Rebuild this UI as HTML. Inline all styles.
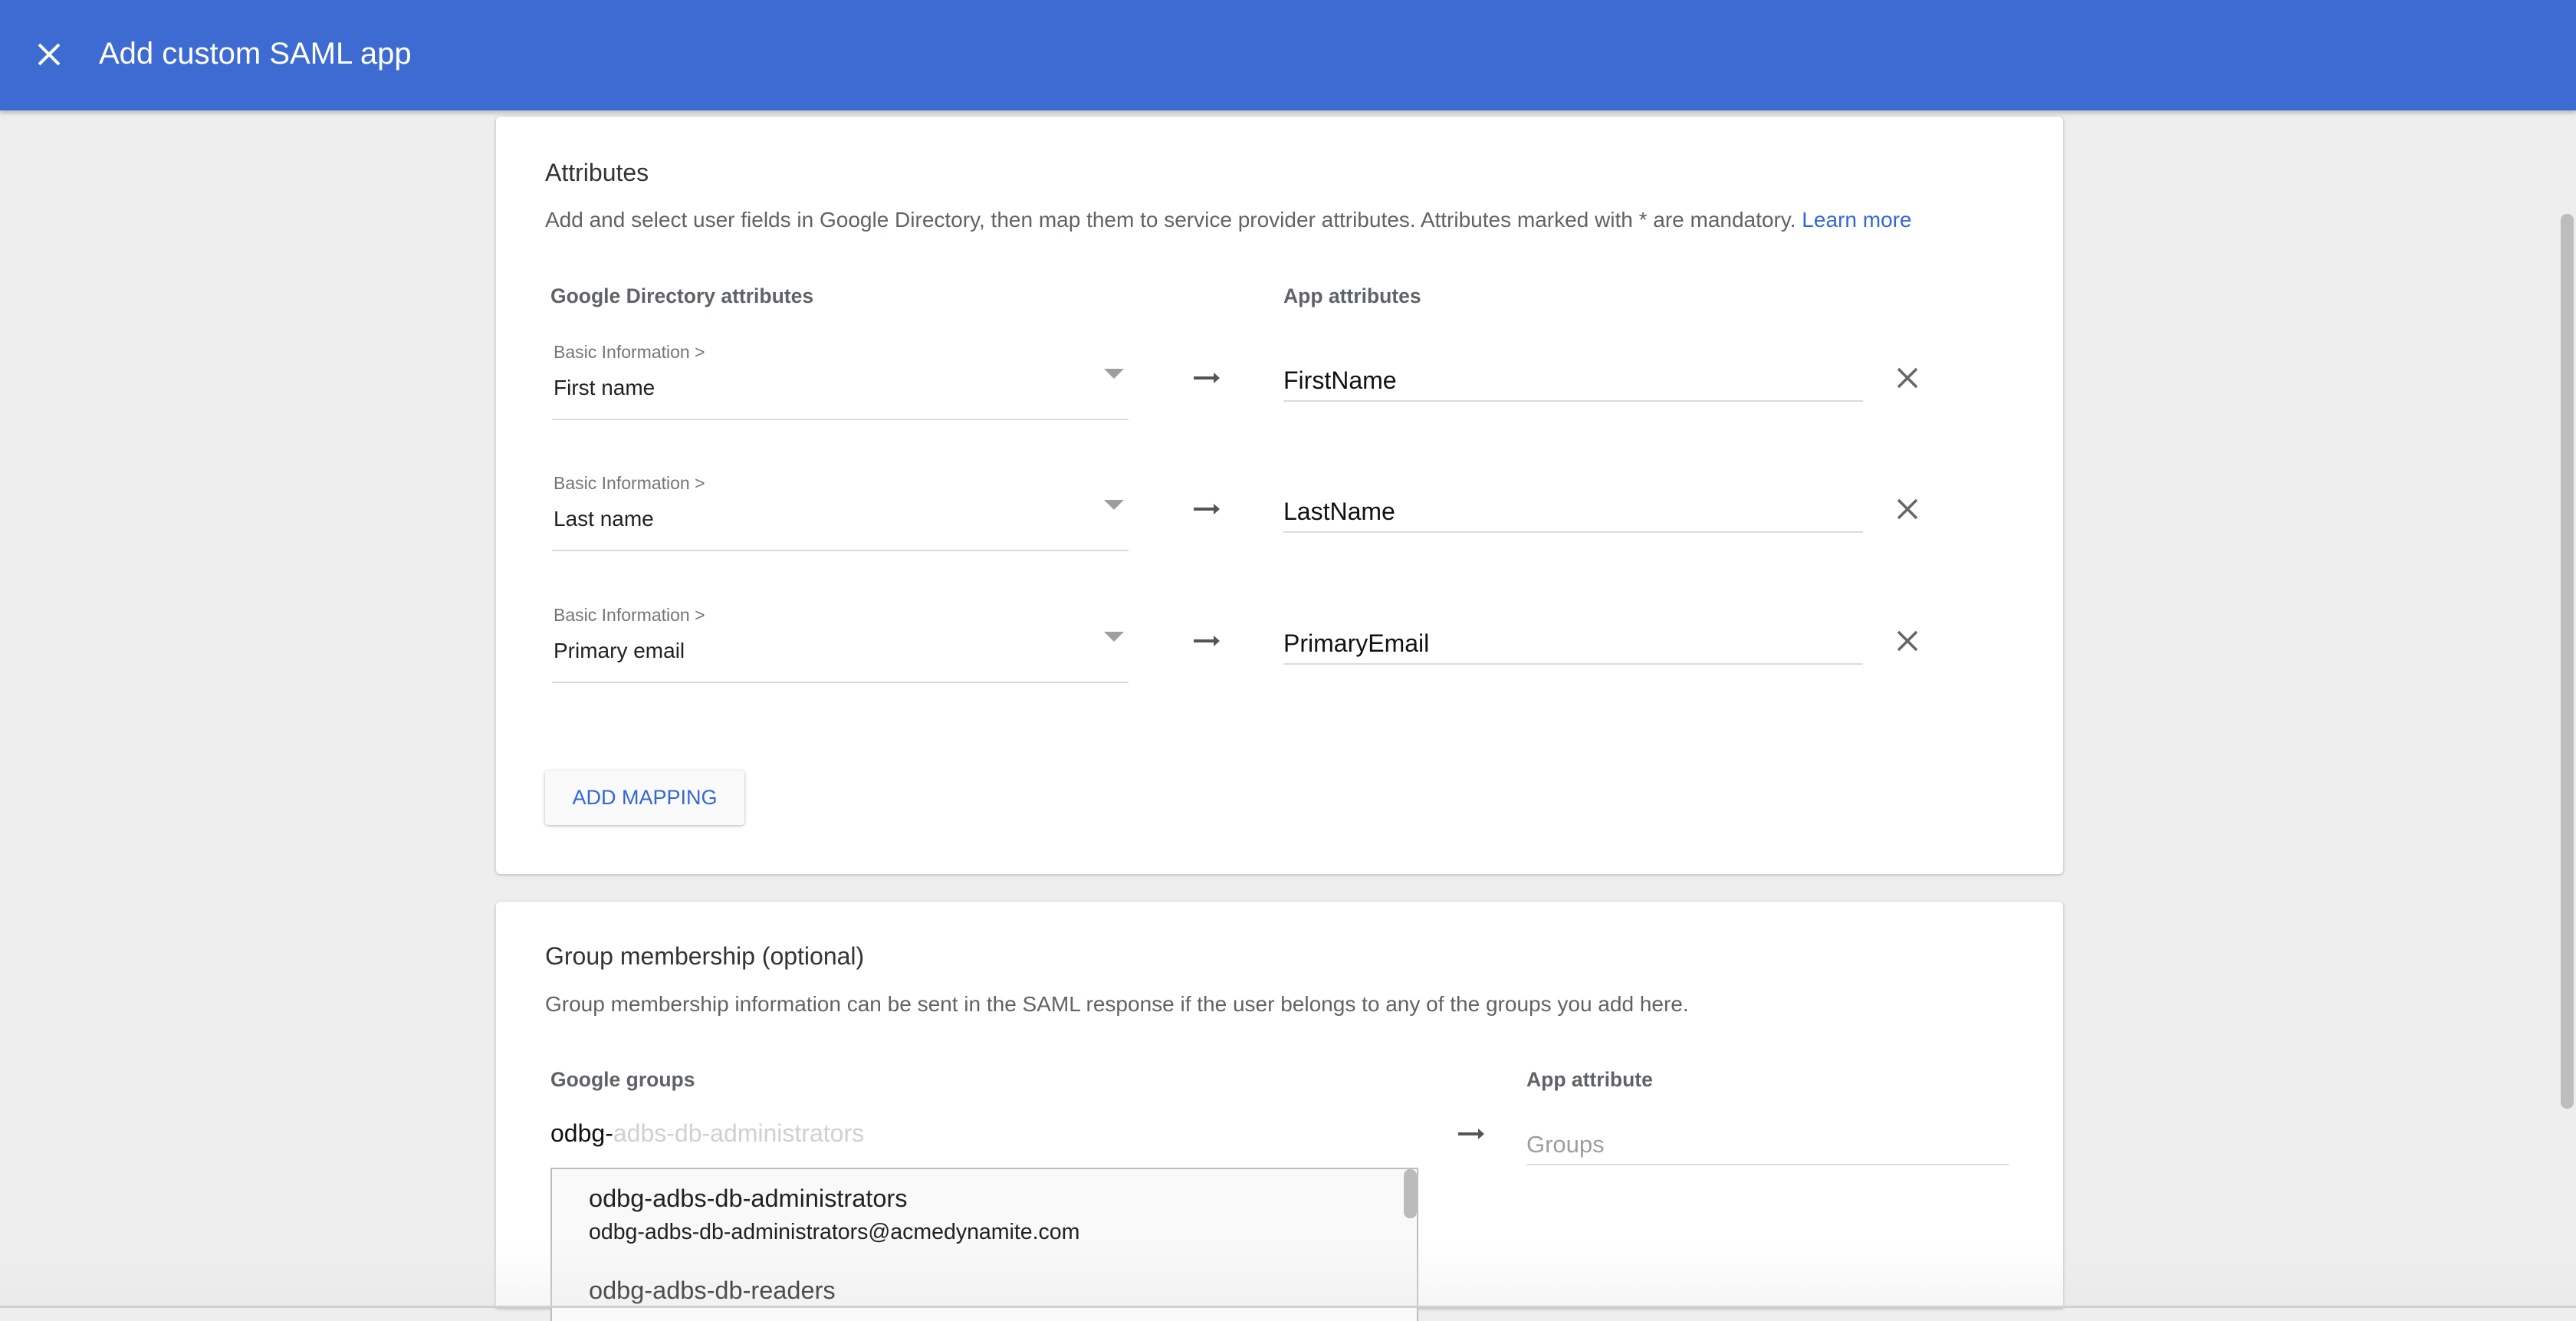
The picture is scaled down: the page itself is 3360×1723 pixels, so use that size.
<!DOCTYPE html>
<html><head><meta charset="utf-8"><style>
*{margin:0;padding:0;box-sizing:border-box}
body{width:3360px;height:1706px;overflow:hidden;background:#eeeeee;font-family:"Liberation Sans",Arial,sans-serif;position:relative}
.a{position:absolute;white-space:nowrap}
.hdr{position:absolute;left:0;top:0;width:3360px;height:144px;background:#3e6bd2;box-shadow:0 3px 6px rgba(0,0,0,.25);z-index:2}
.card{position:absolute;background:#fff;border-radius:6px;box-shadow:0 1px 4px rgba(0,0,0,.25)}
.t{color:#202124}
.g{color:#5f6368}
.lbl{font-size:26.5px;font-weight:bold;color:#5f6368}
.sm{font-size:23px;color:#757575}
.val{font-size:28px;color:#202124}
.ul{position:absolute;height:2px;background:#dcdcdc}
</style></head><body>
<div class="hdr">
<svg class="a" style="left:48px;top:55px" width="32" height="32" viewBox="0 0 32 32"><path d="M3 3L29 29M29 3L3 29" stroke="#fff" stroke-width="4"/></svg>
<div class="a" style="left:129px;top:48px;font-size:40px;color:#fff">Add custom SAML app</div>
</div>
<div class="card" style="left:647px;top:152px;width:2044px;height:988px"></div>
<div class="a t" style="left:711px;top:207px;font-size:32px;color:#333">Attributes</div>
<div class="a g" style="left:711px;top:271px;font-size:28px">Add and select user fields in Google Directory, then map them to service provider attributes. Attributes marked with * are mandatory. <span style="color:#3367d6">Learn more</span></div>
<div class="a lbl" style="left:718px;top:371px">Google Directory attributes</div>
<div class="a lbl" style="left:1674px;top:371px">App attributes</div>

<div class="a sm" style="left:722px;top:446px">Basic Information &gt;</div>
<div class="a val" style="left:722px;top:490px">First name</div>
<div class="ul" style="left:720px;top:546px;width:752px"></div>
<svg class="a" style="left:1440px;top:481px" width="26" height="14"><path d="M0 0H26L13 13Z" fill="#9e9e9e"/></svg>
<svg class="a" style="left:1557px;top:484px" width="36" height="18"><path d="M0 9H30" stroke="#555" stroke-width="4"/><path d="M26 2L34 9L26 16Z" fill="#555"/></svg>
<div class="a" style="left:1674px;top:478px;font-size:32px;color:#111">FirstName</div>
<div class="ul" style="left:1674px;top:522px;width:756px"></div>
<svg class="a" style="left:2474px;top:479px" width="28" height="28"><path d="M2 2L26 26M26 2L2 26" stroke="#666" stroke-width="3.5"/></svg>

<div class="a sm" style="left:722px;top:617px">Basic Information &gt;</div>
<div class="a val" style="left:722px;top:661px">Last name</div>
<div class="ul" style="left:720px;top:717px;width:752px"></div>
<svg class="a" style="left:1440px;top:652px" width="26" height="14"><path d="M0 0H26L13 13Z" fill="#9e9e9e"/></svg>
<svg class="a" style="left:1557px;top:655px" width="36" height="18"><path d="M0 9H30" stroke="#555" stroke-width="4"/><path d="M26 2L34 9L26 16Z" fill="#555"/></svg>
<div class="a" style="left:1674px;top:649px;font-size:32px;color:#111">LastName</div>
<div class="ul" style="left:1674px;top:693px;width:756px"></div>
<svg class="a" style="left:2474px;top:650px" width="28" height="28"><path d="M2 2L26 26M26 2L2 26" stroke="#666" stroke-width="3.5"/></svg>

<div class="a sm" style="left:722px;top:789px">Basic Information &gt;</div>
<div class="a val" style="left:722px;top:833px">Primary email</div>
<div class="ul" style="left:720px;top:889px;width:752px"></div>
<svg class="a" style="left:1440px;top:824px" width="26" height="14"><path d="M0 0H26L13 13Z" fill="#9e9e9e"/></svg>
<svg class="a" style="left:1557px;top:827px" width="36" height="18"><path d="M0 9H30" stroke="#555" stroke-width="4"/><path d="M26 2L34 9L26 16Z" fill="#555"/></svg>
<div class="a" style="left:1674px;top:821px;font-size:32px;color:#111">PrimaryEmail</div>
<div class="ul" style="left:1674px;top:865px;width:756px"></div>
<svg class="a" style="left:2474px;top:822px" width="28" height="28"><path d="M2 2L26 26M26 2L2 26" stroke="#666" stroke-width="3.5"/></svg>

<div class="a" style="left:711px;top:1005px;width:260px;height:71px;background:#fafafa;border-radius:4px;box-shadow:0 1px 4px rgba(0,0,0,.3);font-size:27px;color:#3367d6;text-align:center;line-height:71px;font-weight:500">ADD MAPPING</div>

<div class="card" style="left:647px;top:1176px;width:2044px;height:530px;border-radius:6px 6px 0 0"></div>
<div class="a" style="left:711px;top:1229px;font-size:32px;color:#333">Group membership (optional)</div>
<div class="a g" style="left:711px;top:1294px;font-size:28px">Group membership information can be sent in the SAML response if the user belongs to any of the groups you add here.</div>
<div class="a lbl" style="left:718px;top:1393px">Google groups</div>
<div class="a lbl" style="left:1991px;top:1393px">App attribute</div>
<div class="a" style="left:718px;top:1460px;font-size:32px;color:#111">odbg-<span style="color:#d0d0d0">adbs-db-administrators</span></div>
<svg class="a" style="left:1902px;top:1470px" width="36" height="18"><path d="M0 9H30" stroke="#555" stroke-width="4"/><path d="M26 2L34 9L26 16Z" fill="#555"/></svg>
<div class="a" style="left:1991px;top:1475px;font-size:31px;color:#9e9e9e">Groups</div>
<div class="ul" style="left:1991px;top:1518px;width:630px"></div>
<div class="a" style="left:718px;top:1523px;width:1132px;height:200px;background:#f9f9f9;border:2px solid #bdbdbd;border-bottom:none"></div>
<div class="a" style="left:1831px;top:1525px;width:17px;height:64px;background:#bbb;border-radius:8px"></div>
<div class="a" style="left:768px;top:1545px;font-size:32.5px;color:#202124">odbg-adbs-db-administrators</div>
<div class="a" style="left:768px;top:1591px;font-size:28.5px;color:#202124">odbg-adbs-db-administrators@acmedynamite.com</div>
<div class="a" style="left:768px;top:1665px;font-size:32.5px;color:#202124">odbg-adbs-db-readers</div>
<div class="a" style="left:0;top:1620px;width:3360px;height:86px;background:linear-gradient(rgba(238,238,238,0),rgba(225,225,225,.3))"></div>
<div class="a" style="left:0;top:1703px;width:3360px;height:3px;background:#d0d0d0"></div>
<div class="a" style="left:3340px;top:279px;width:17px;height:1167px;background:#bdbdbd;border-radius:8px"></div>
</body></html>
